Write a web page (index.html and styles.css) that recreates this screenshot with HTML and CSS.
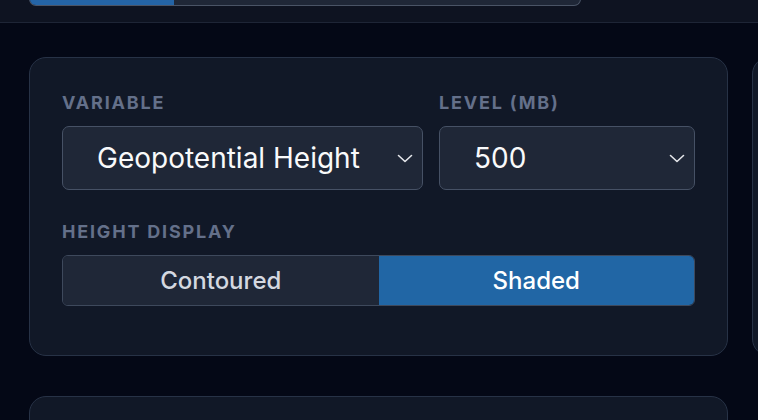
FILE: index.html
```html
<!DOCTYPE html>
<html lang="en">
<head>
<meta charset="utf-8">
<title>Controls</title>
<link rel="stylesheet" href="styles.css">
</head>
<body>
<header class="topbar">
  <div class="top-seg">
    <div class="top-seg-item active"></div>
    <div class="top-seg-item"></div>
  </div>
</header>
<main class="main">
  <div class="row">
    <section class="card">
      <div class="fields">
        <div class="field">
          <div class="label">Variable</div>
          <div class="select">
            <span class="select-text">Geopotential Height</span>
            <svg class="chev" width="16" height="9" viewBox="0 0 16 9"><path d="M1.5 1.5 L8 7.5 L14.5 1.5" fill="none" stroke="#e5e7eb" stroke-width="1.6" stroke-linecap="round" stroke-linejoin="round"/></svg>
          </div>
        </div>
        <div class="field">
          <div class="label">Level (mb)</div>
          <div class="select">
            <span class="select-text">500</span>
            <svg class="chev" width="16" height="9" viewBox="0 0 16 9"><path d="M1.5 1.5 L8 7.5 L14.5 1.5" fill="none" stroke="#e5e7eb" stroke-width="1.6" stroke-linecap="round" stroke-linejoin="round"/></svg>
          </div>
        </div>
      </div>
      <div class="label label-gap">Height Display</div>
      <div class="toggle">
        <div class="toggle-item">Contoured</div>
        <div class="toggle-item active">Shaded</div>
      </div>
    </section>
    <section class="card card-side"></section>
  </div>
  <div class="row row-next">
    <section class="card card-next"></section>
  </div>
</main>
</body>
</html>
```

FILE: styles.css
```css
* { box-sizing: border-box; }
html, body { margin: 0; padding: 0; }
body {
  background: #040816;
  font-family: Inter, "Noto Sans", "Liberation Sans", sans-serif;
  color: #f3f4f6;
  width: 758px;
  height: 420px;
  overflow: hidden;
}
.topbar {
  display: flex;
  align-items: flex-start;
  height: 23px;
  background: #0e1321;
  border-bottom: 1px solid #1e2536;
}
.top-seg {
  display: flex;
  width: 552px;
  height: 46px;
  margin-top: -40px;
  margin-left: 29px;
  border: 1px solid #4a5466;
  border-top: none;
  border-radius: 0 0 7px 7px;
  overflow: hidden;
  background: #1f2737;
}
.top-seg-item { flex: 1; }
.top-seg-item.active { flex: 0 0 144px; background: #2464a6; }
.main {
  padding: 34px 0 0 29px;
}
.row {
  display: flex;
  gap: 24px;
}
.row-next { margin-top: 40px; }
.card {
  flex: 0 0 699px;
  background: #111827;
  border: 1px solid #273246;
  border-radius: 17px;
  padding: 33px 32px 49px;
}
.card-side { height: 299px; }
.card-next { height: 80px; }
.fields {
  display: grid;
  grid-template-columns: 361fr 256fr;
  gap: 16px;
}
.label {
  font-size: 18px;
  line-height: 24px;
  font-weight: 700;
  letter-spacing: 0.1em;
  text-transform: uppercase;
  color: #64708a;
  margin-bottom: 11px;
}
.label-gap { margin-top: 30px; }
.select {
  display: flex;
  align-items: center;
  height: 64px;
  background: #1f2737;
  border: 1px solid #465165;
  border-radius: 7px;
  padding: 0 9px 0 34px;
}
.select-text {
  flex: 1;
  font-size: 28px;
  font-weight: 400;
  color: #f9fafb;
}
.chev { flex: 0 0 auto; }
.toggle {
  display: flex;
  height: 51px;
  border: 1px solid #3e495c;
  border-radius: 6px;
  overflow: hidden;
}
.toggle-item {
  flex: 1;
  display: flex;
  align-items: center;
  justify-content: center;
  background: #1f2737;
  color: #d4d8e0;
  font-size: 24px;
  font-weight: 500;
}
.toggle-item.active {
  background: #2166a5;
  color: #ffffff;
}
```
